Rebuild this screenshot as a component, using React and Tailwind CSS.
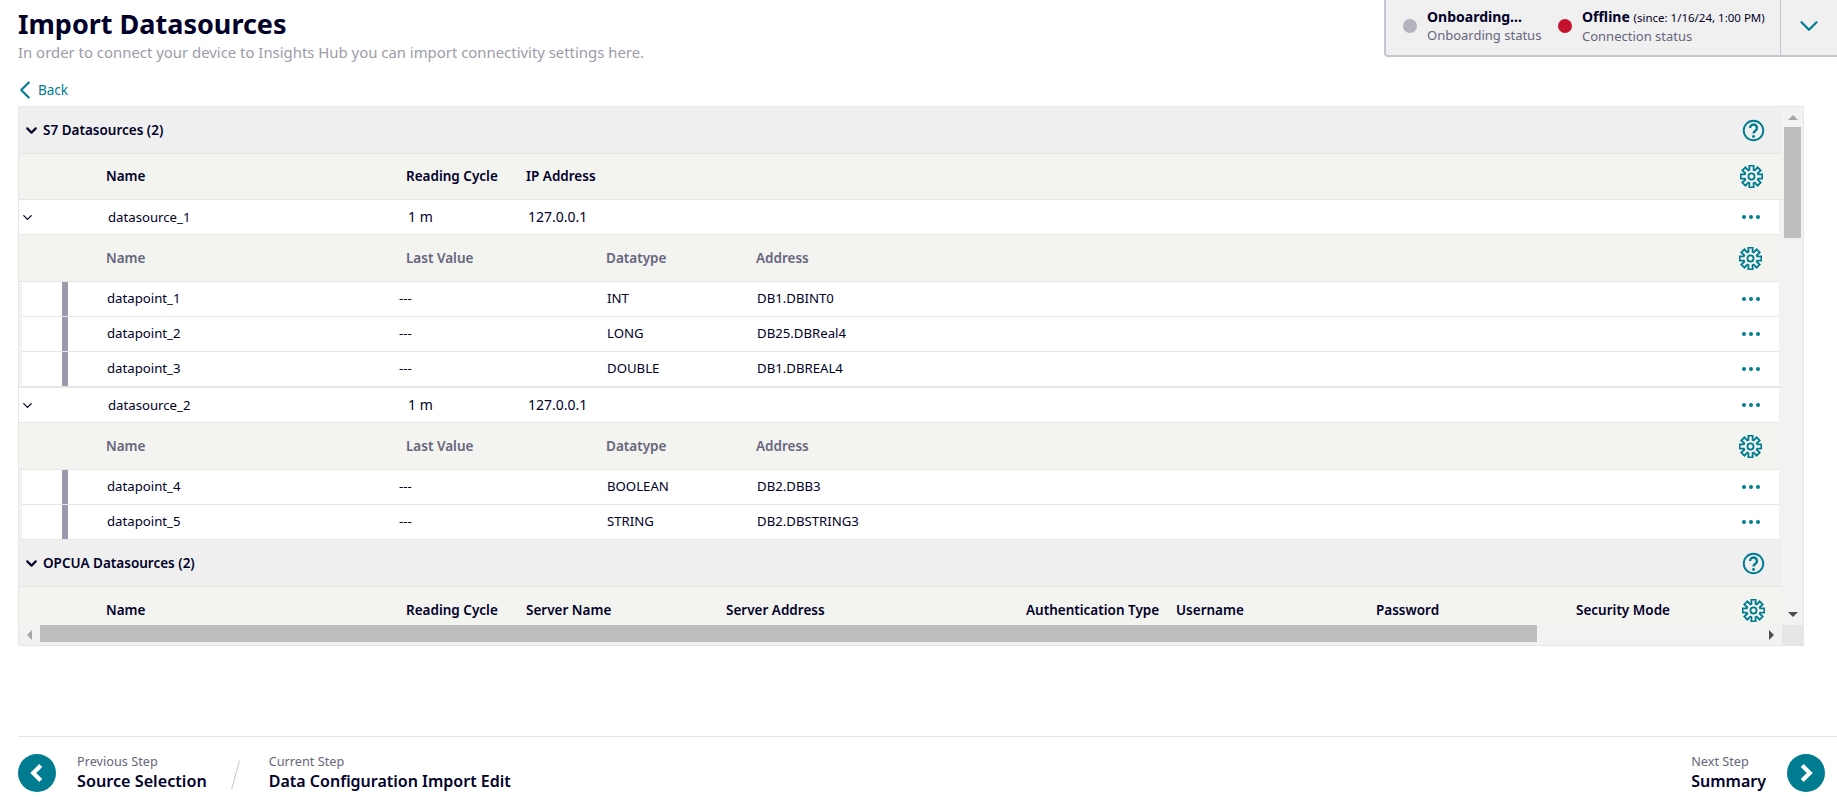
import React from 'react';
import { ChevronDown, ChevronLeft, ChevronRight } from 'lucide-react';

const s7Cols = 'grid-cols-[87px_300px_120px_1fr_50px]';
const pointCols = 'grid-cols-[84px_293px_207px_150px_1fr_50px]';
const subCols = 'grid-cols-[87px_300px_200px_150px_1fr_50px]';
const opcuaCols = 'grid-cols-[87px_300px_120px_200px_300px_150px_200px_200px_1fr_50px]';

// 8 tooth outline, the lucide gear is too round for this one
const gearPath = () => {
  let d = '';
  for (let i = 0; i < 8; i++) {
    const a = (i * Math.PI) / 4 - Math.PI / 2;
    const pts = [
      [7.3, a - 0.3],
      [11.5, a - 0.2],
      [11.5, a + 0.2],
      [7.3, a + 0.3],
    ];
    pts.forEach(([r, t], j) => {
      const x = (12 + r * Math.cos(t)).toFixed(2);
      const y = (12 + r * Math.sin(t)).toFixed(2);
      d += `${i === 0 && j === 0 ? 'M' : 'L'}${x} ${y} `;
    });
  }
  return d + 'Z';
};

const Gear = () => (
  <svg width="23" height="23" viewBox="0 0 24 24" fill="none" stroke="#007c91" strokeWidth="1.9" strokeLinejoin="miter">
    <path d={gearPath()} />
    <circle cx="12" cy="12" r="3.2" />
  </svg>
);

const Help = () => (
  <svg width="23" height="23" viewBox="0 0 24 24" fill="none" stroke="#007c91" className="ml-auto">
    <circle cx="12" cy="12" r="10.2" strokeWidth="2" />
    <path d="M8.4 9.3a3.6 3.6 0 1 1 5.6 3c-1.4.9-2 1.5-2 2.9" strokeWidth="2.5" />
    <circle cx="12" cy="18.2" r="1.5" fill="#007c91" stroke="none" />
  </svg>
);

const Dots = () => (
  <svg width="20" height="6" viewBox="0 0 20 6" className="fill-[#007c91]">
    <circle cx="3" cy="3" r="2" />
    <circle cx="10" cy="3" r="2" />
    <circle cx="17" cy="3" r="2" />
  </svg>
);

const SectionHeader = ({ title }) => (
  <div className="flex h-[47px] items-center border-b border-[#e6e6e6] bg-[#efefef] pl-[4px] pr-[17px]">
    <ChevronDown size={17} strokeWidth={3} className="text-[#000028]" />
    <span className="ml-[2px] pl-[1px] text-[13.5px] font-semibold text-[#000028]">{title}</span>
    <Help />
  </div>
);

const HeaderRow = () => (
  <div className={`grid h-[46px] items-center border-b border-[#e6e6e6] bg-[#f3f3ef] text-[13.5px] font-semibold text-[#000028] ${s7Cols}`}>
    <span />
    <span>Name</span>
    <span>Reading Cycle</span>
    <span>IP Address</span>
    <span className="flex justify-start pl-[8px]"><Gear /></span>
  </div>
);

const SourceRow = ({ name }) => (
  <div className={`mr-[3px] grid h-[35px] items-center border-b border-[#e6e6e6] bg-white text-[14px] leading-[20px] text-[#000028] ${s7Cols}`}>
    <span className="pl-[1px]"><ChevronDown size={15} strokeWidth={2} /></span>
    <span className="pl-[2px] text-[13.2px]">{name}</span>
    <span className="pl-[2px]">1 m</span>
    <span className="pl-[2px]">127.0.0.1</span>
    <span className="flex pl-[12px]"><Dots /></span>
  </div>
);

const SubHeader = () => (
  <div className={`mr-[3px] grid h-[47px] items-center border-b border-[#e6e6e6] bg-[#f3f3ef] text-[13.5px] font-semibold text-[#66667e] ${subCols}`}>
    <span />
    <span>Name</span>
    <span>Last Value</span>
    <span>Datatype</span>
    <span>Address</span>
    <span className="flex pl-[10px]"><Gear /></span>
  </div>
);

const PointRow = ({ name, type, address }) => (
  <div className={`ml-[3px] mr-[3px] grid h-[35px] items-center border-b border-[#e6e6e6] bg-white text-[13.2px] text-[#000028] ${pointCols}`}>
    <span className="h-full pl-[40px]">
      <span className="block h-full w-[6px] bg-[#9d99ad]" />
    </span>
    <span className="pl-[1px]">{name}</span>
    <span>---</span>
    <span className="pl-[1px]">{type}</span>
    <span className="pl-[1px]">{address}</span>
    <span className="flex pl-[12px]"><Dots /></span>
  </div>
);

const sources = [
  {
    name: 'datasource_1',
    points: [
      ['datapoint_1', 'INT', 'DB1.DBINT0'],
      ['datapoint_2', 'LONG', 'DB25.DBReal4'],
      ['datapoint_3', 'DOUBLE', 'DB1.DBREAL4'],
    ],
  },
  {
    name: 'datasource_2',
    points: [
      ['datapoint_4', 'BOOLEAN', 'DB2.DBB3'],
      ['datapoint_5', 'STRING', 'DB2.DBSTRING3'],
    ],
  },
];

const StatusPanel = () => (
  <div className="flex h-[57px] w-[453px] shrink-0 items-stretch rounded-bl-[4px] border-b-2 border-l-2 border-[#c5c5d0] bg-[#f0f0f0]">
    <div className="flex flex-1 items-center pb-[3px] pl-[17px]">
      <span className="h-[14px] w-[14px] rounded-full bg-[#b3b3be]" />
      <div className="ml-[10px] w-[128px] leading-[18px]">
        <div className="text-[14px] font-bold text-[#000028]">Onboarding...</div>
        <div className="text-[13px] text-[#66667e]">Onboarding status</div>
      </div>
      <span className="ml-[3px] h-[14px] w-[14px] rounded-full bg-[#c4122f]" />
      <div className="ml-[10px] leading-[19px]">
        <div className="text-[14px] font-bold text-[#000028]">
          Offline <span className="text-[11.5px] font-normal">(since: 1/16/24, 1:00 PM)</span>
        </div>
        <div className="text-[13px] text-[#66667e]">Connection status</div>
      </div>
    </div>
    <div className="flex w-[57px] items-center justify-center border-l border-[#c5c5d0] pb-[3px]">
      <ChevronDown size={30} strokeWidth={1.8} className="text-[#007c91]" />
    </div>
  </div>
);

export default function App() {
  return (
    <div className="flex h-screen flex-col overflow-hidden bg-white font-['Noto_Sans',sans-serif]">
      <div className="flex items-start justify-between pl-[18px]">
        <div className="pt-[6px]">
          <h1 className="text-[27px] font-bold leading-[36px] text-[#000028]">Import Datasources</h1>
          <p className="text-[14.9px] leading-[20px] text-[#9c9caa]">
            In order to connect your device to Insights Hub you can import connectivity settings here.
          </p>
        </div>
        <StatusPanel />
      </div>

      <div className="mt-[15px] flex h-[26px] items-center pl-[19px] text-[#007c91]">
        <ChevronLeft size={30} strokeWidth={1.7} className="-ml-[9px]" />
        <span className="ml-[-2px] text-[13.5px]">Back</span>
      </div>

      <div className="mx-[18px] mr-[33px] mt-[3px] grid h-[540px] grid-cols-[1fr_21px] grid-rows-[1fr_20px] border border-[#e6e6e6] bg-[#f2f2f2]">
        <div className="overflow-hidden">
          <SectionHeader title="S7 Datasources (2)" />
          <HeaderRow />
          {sources.map((source, i) => (
            <div key={source.name} className={i > 0 ? 'border-t border-[#e6e6e6]' : ''}>
              <SourceRow name={source.name} />
              <SubHeader />
              {source.points.map(([name, type, address]) => (
                <PointRow key={name} name={name} type={type} address={address} />
              ))}
            </div>
          ))}
          <SectionHeader title="OPCUA Datasources (2)" />
          <div className={`grid h-[46px] items-center bg-[#f3f3ef] text-[13.5px] font-semibold text-[#000028] ${opcuaCols}`}>
            <span />
            <span>Name</span>
            <span>Reading Cycle</span>
            <span>Server Name</span>
            <span>Server Address</span>
            <span>Authentication Type</span>
            <span>Username</span>
            <span>Password</span>
            <span>Security Mode</span>
            <span className="flex pl-[10px]"><Gear /></span>
          </div>
        </div>

        <div className="flex flex-col items-center bg-[#f2f2f2] pt-[8px]">
          <span className="h-0 w-0 border-x-[5px] border-b-[5px] border-x-transparent border-b-[#a6a6a6]" />
          <span className="mt-[7px] h-[111px] w-[17px] bg-[#bebebe]" />
          <span className="mt-auto mb-[8px] h-0 w-0 border-x-[5px] border-t-[5px] border-x-transparent border-t-[#4d4d4d]" />
        </div>

        <div className="flex items-center bg-[#f2f2f2]">
          <span className="ml-[8px] h-0 w-0 border-y-[5px] border-r-[5px] border-y-transparent border-r-[#a6a6a6]" />
          <span className="ml-[8px] h-[17px] w-[1497px] self-start bg-[#bebebe]" />
          <span className="ml-auto mr-[8px] h-0 w-0 border-y-[5px] border-l-[5px] border-y-transparent border-l-[#4d4d4d]" />
        </div>
        <div className="bg-[#e6e6e6]" />
      </div>

      <div className="mt-auto mb-[15px] ml-[18px] flex h-[56px] items-end border-t border-[#e6e6e6] pb-0">
        <span className="flex h-[38px] w-[38px] items-center justify-center rounded-full bg-[#007c91]">
          <ChevronLeft size={30} strokeWidth={3.4} strokeLinecap="butt" strokeLinejoin="miter" className="text-white" />
        </span>
        <div className="ml-[21px]">
          <div className="text-[12.7px] leading-[18px] text-[#66667e]">Previous Step</div>
          <div className="text-[16.2px] font-semibold leading-[22px] text-[#000028]">Source Selection</div>
        </div>
        <span className="ml-[28px] mr-[33px] mb-[2px] h-[30px] w-[1px] rotate-[15deg] bg-[#c5c5d0]" />
        <div>
          <div className="text-[12.7px] leading-[18px] text-[#66667e]">Current Step</div>
          <div className="text-[16px] font-semibold leading-[22px] text-[#000028]">Data Configuration Import Edit</div>
        </div>
        <div className="ml-auto">
          <div className="text-[12.7px] leading-[18px] text-[#66667e]">Next Step</div>
          <div className="text-[16px] font-semibold leading-[22px] text-[#000028]">Summary</div>
        </div>
        <span className="ml-[21px] mr-[12px] flex h-[38px] w-[38px] items-center justify-center rounded-full bg-[#007c91]">
          <ChevronRight size={30} strokeWidth={3.4} strokeLinecap="butt" strokeLinejoin="miter" className="text-white" />
        </span>
      </div>
    </div>
  );
}
